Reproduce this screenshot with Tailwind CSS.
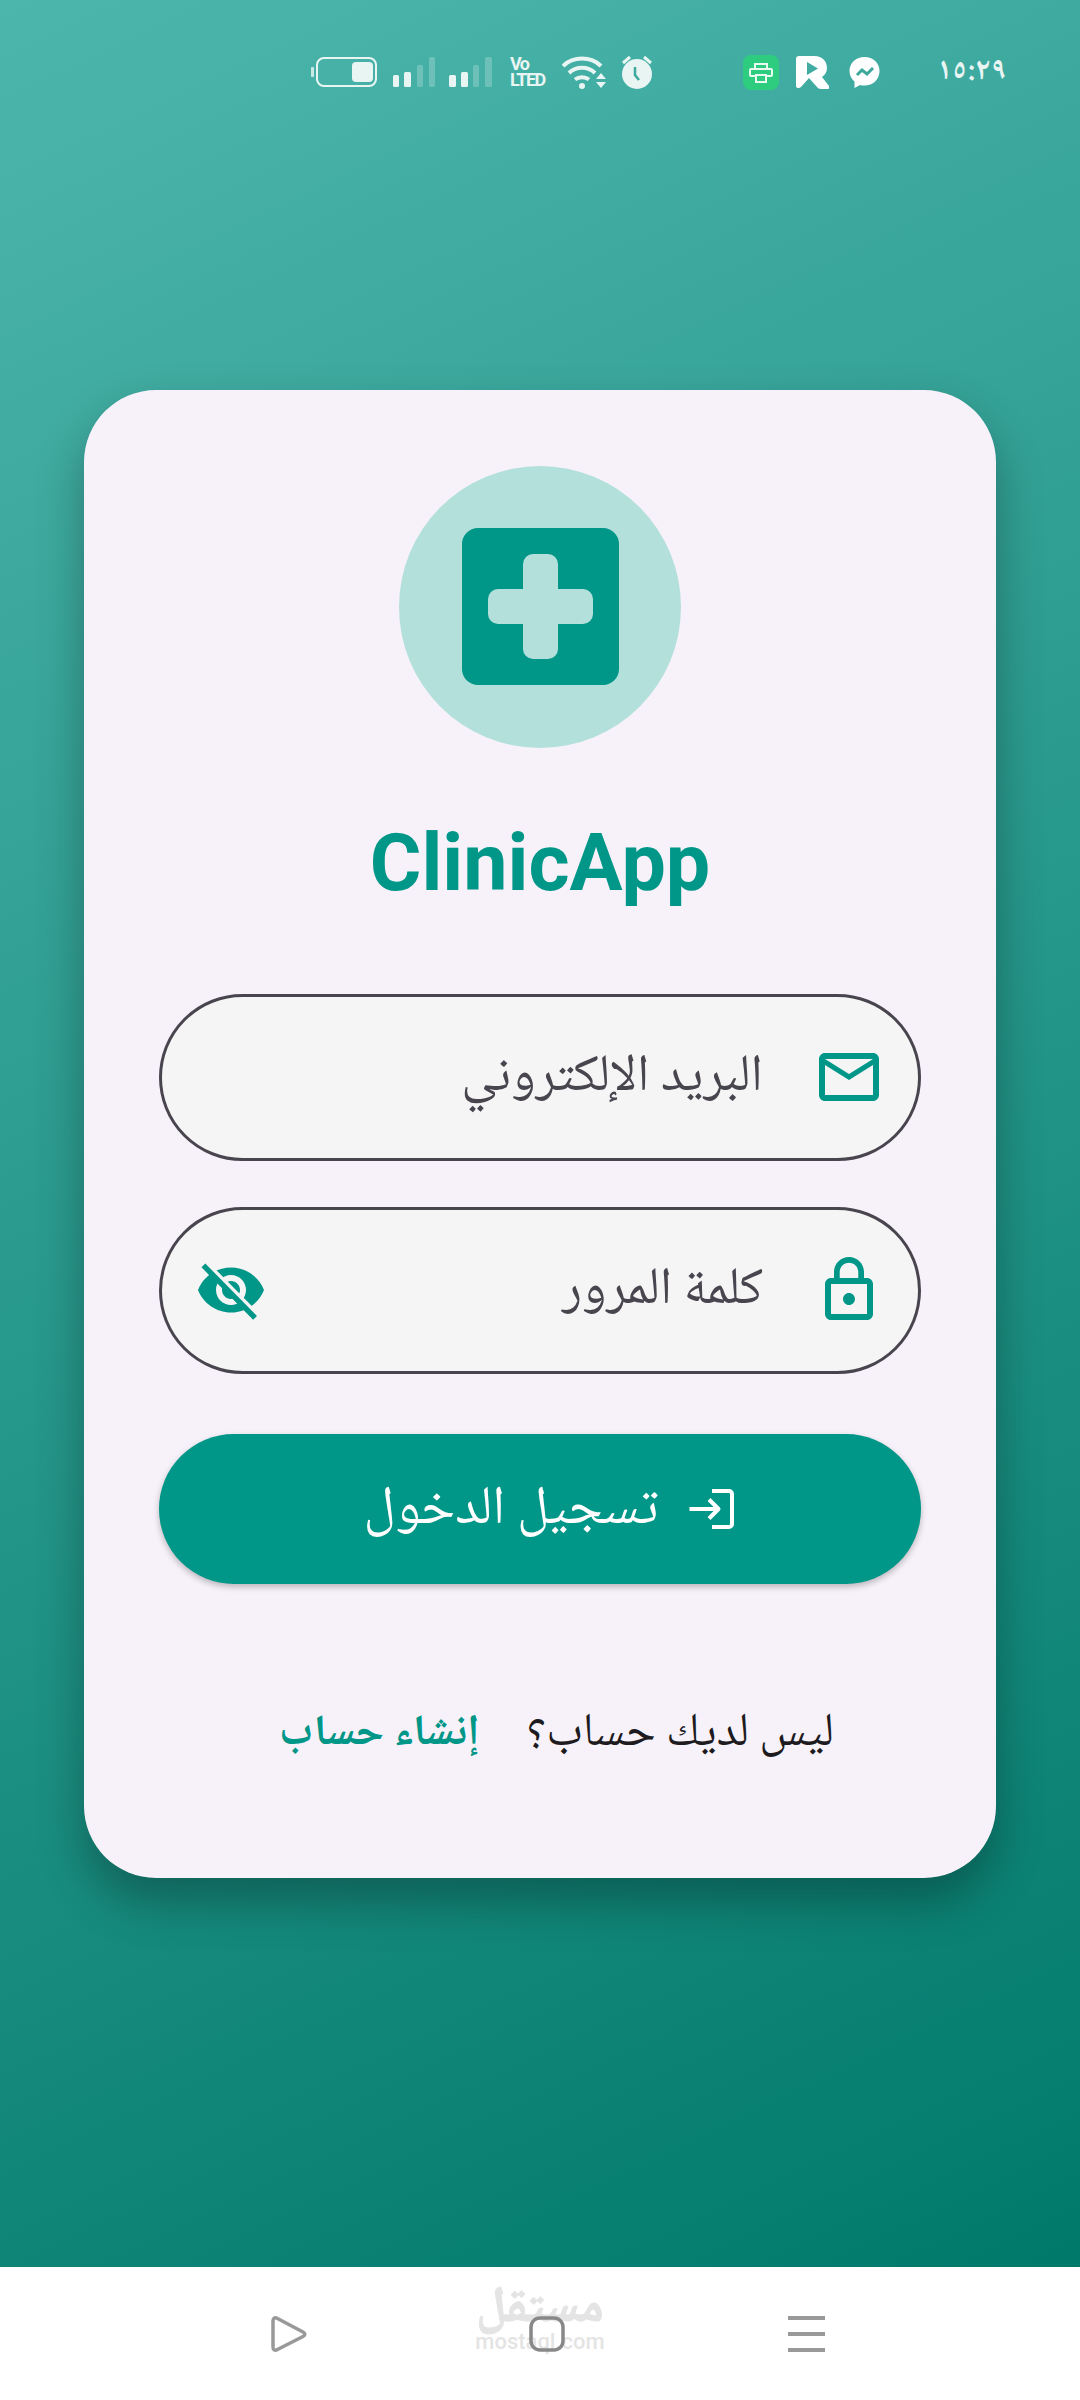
<!DOCTYPE html>
<html lang="ar" dir="rtl">
<head>
	<meta charset="UTF-8">
	<title>ClinicApp</title>
	<script src="https://cdn.jsdelivr.net/npm/@tailwindcss/browser@4"></script>
</head>
<body class="w-[1080px] h-[2400px] overflow-hidden bg-white font-['Noto_Naskh_Arabic','Noto_Sans_Arabic','DejaVu_Sans',sans-serif]">
	<div class="relative h-[2267px] flex items-center justify-center bg-[linear-gradient(154.5deg,#4db6ac,#00796b)]">

		<!-- شريط الحالة -->
		<div dir="ltr" class="absolute top-0 left-0 right-0 h-[144px] flex items-center pl-[311px] text-[#e8f5f3]">
			<svg width="66" height="30" viewBox="0 0 66 30" fill="none">
				<rect x="0" y="10" width="3" height="10" rx="1" fill="#c9e9e5"/>
				<rect x="6" y="1" width="59" height="28" rx="7" stroke="#e8f5f3" stroke-width="2"/>
				<rect x="41" y="5" width="21" height="20" rx="4" fill="#e8f5f3"/>
			</svg>
			<svg class="ml-[16px]" width="42" height="30" viewBox="0 0 42 30" fill="#e8f5f3">
				<rect x="0" y="18" width="6" height="12" rx="1.5"/>
				<rect x="11" y="15" width="7" height="15" rx="1.5"/>
				<rect x="24" y="8" width="6" height="22" rx="1.5" opacity="0.25"/>
				<rect x="36" y="0" width="6" height="30" rx="1.5" opacity="0.25"/>
			</svg>
			<svg class="ml-[14px]" width="43" height="30" viewBox="0 0 43 30" fill="#e8f5f3">
				<rect x="0" y="18" width="7" height="12" rx="1.5"/>
				<rect x="12" y="15" width="7" height="15" rx="1.5"/>
				<rect x="24" y="8" width="6" height="22" rx="1.5" opacity="0.25"/>
				<rect x="36" y="0" width="7" height="30" rx="1.5" opacity="0.25"/>
			</svg>
			<div class="ml-[18px] w-[33px] flex flex-col font-['Roboto'] font-bold text-[18px] leading-[16px] tracking-[-1.5px]">
				<span>Vo</span>
				<span>LTED</span>
			</div>
			<svg class="ml-[19px]" width="44" height="34" viewBox="0 0 44 34" fill="none" stroke="#e8f5f3" stroke-width="4">
				<path d="M1 11C11 1 29 1 39 11"/>
				<path d="M7 18C14 11 26 11 33 18"/>
				<path d="M13 24.500C17 21.500 23 21.500 27 24.500"/>
				<circle cx="20" cy="31" r="3" fill="#e8f5f3" stroke="none"/>
				<path d="M34 24h10l-5-6zM34 27h10l-5 6z" fill="#e8f5f3" stroke="none"/>
			</svg>
			<svg class="ml-[15px]" width="32" height="34" viewBox="0 0 32 34">
				<circle cx="16" cy="19" r="15" fill="#e8f5f3"/>
				<path d="M14 12v8l4 5" fill="none" stroke="#3fa89c" stroke-width="2.500"/>
				<path d="M2 8l7-6M30 8l-7-6" stroke="#e8f5f3" stroke-width="3"/>
			</svg>
			<svg class="ml-[90px]" width="36" height="35" viewBox="0 0 36 35" fill="none" stroke="#e8fbf1" stroke-width="2">
				<rect width="36" height="35" rx="8" fill="#2ecc7e" stroke="none"/>
				<path d="M12 14V9h12v5M12 21H8a1 1 0 0 1-1-1v-5a1 1 0 0 1 1-1h20a1 1 0 0 1 1 1v5a1 1 0 0 1-1 1h-4"/>
				<rect x="13" y="20" width="10" height="7"/>
			</svg>
			<svg class="ml-[17px]" width="33" height="35" viewBox="0 0 33 35" fill="#fff">
				<path fill-rule="evenodd" d="M3 1H18C27 1 31 7 31 13C31 17 29 20 26 22L33 31C34 33 33 34 31 34H25C23 34 22 33 21 32L13 23L5 32C3 34 0 33 0 31V4C0 2 1 1 3 1ZM11 7L22 13.500L11 20Z"/>
			</svg>
			<svg class="ml-[20px]" width="31" height="33" viewBox="0 0 31 33">
				<path d="M15.500 1C7 1 0.500 7 0.500 15C0.500 19.500 2.500 23 5.500 25.500V32L11 29C12.500 29.500 14 29.500 15.500 29.500C24 29.500 30.500 23.500 30.500 15C30.500 7 24 1 15.500 1Z" fill="#fff"/>
				<path d="M8 19L13 14L18 18L24 12" fill="none" stroke="#3fa89c" stroke-width="3"/>
			</svg>
			<span class="ml-[57px] font-bold text-[31px] leading-none">١٥:٢٩</span>
		</div>

		<!-- البطاقة -->
		<div class="w-[912px] h-[1488px] rounded-[72px] bg-[#f7f2fa] shadow-[0_24px_48px_rgba(0,0,0,0.3)] px-[75px] pt-[76px] flex flex-col">
			<div class="self-center w-[282px] h-[282px] rounded-full bg-[#b4e0dc] flex items-center justify-center">
				<svg width="157" height="157" viewBox="0 0 157 157">
					<rect width="157" height="157" rx="16" fill="#009688"/>
					<rect x="61" y="26" width="35" height="105" rx="10" fill="#b4e0dc"/>
					<rect x="26" y="61" width="105" height="35" rx="10" fill="#b4e0dc"/>
				</svg>
			</div>
			<h1 dir="ltr" class="mt-[60px] h-[110px] text-center font-['Roboto'] font-bold text-[79px] leading-[110px] text-[#009688]">ClinicApp</h1>

			<div class="mt-[76px] h-[167px] rounded-full border-[3px] border-[#49454f] bg-[#f5f5f5] flex items-center px-[33px] text-[#49454f] text-[52px]">
				<svg class="shrink-0" width="72" height="72" viewBox="0 0 24 24" fill="#009688">
					<path d="M20 4H4c-1.100 0-2 .9-2 2v12c0 1.100.9 2 2 2h16c1.100 0 2-.9 2-2V6c0-1.100-.9-2-2-2zm0 14H4V8l8 5 8-5v10zm-8-7L4 6h16l-8 5z"/>
				</svg>
				<span class="mr-[50px] pt-[3px]">البريد الإلكتروني</span>
			</div>

			<div class="mt-[46px] h-[167px] rounded-full border-[3px] border-[#49454f] bg-[#f5f5f5] flex items-center px-[33px] text-[#49454f] text-[52px]">
				<svg class="shrink-0" width="72" height="72" viewBox="0 0 24 24" fill="#009688">
					<path d="M12 17c1.100 0 2-.9 2-2s-.9-2-2-2-2 .9-2 2 .9 2 2 2zm6-9h-1V6c0-2.760-2.240-5-5-5S7 3.240 7 6v2H6c-1.100 0-2 .9-2 2v10c0 1.100.9 2 2 2h12c1.100 0 2-.9 2-2V10c0-1.100-.9-2-2-2zM8.900 6c0-1.710 1.390-3.100 3.100-3.100s3.100 1.390 3.100 3.100v2H8.900V6zM18 20H6V10h12v10z"/>
				</svg>
				<span class="mr-[50px] pt-[3px]">كلمة المرور</span>
				<svg class="shrink-0 mr-auto" width="72" height="72" viewBox="0 0 24 24" fill="#009688">
					<path fill-rule="evenodd" d="M12 4.500C7 4.500 2.730 7.610 1 12c1.730 4.390 6 7.500 11 7.500s9.270-3.110 11-7.500c-1.730-4.390-6-7.500-11-7.500zM12 17c-2.760 0-5-2.240-5-5s2.240-5 5-5 5 2.240 5 5-2.240 5-5 5zm0-8c-1.660 0-3 1.340-3 3s1.340 3 3 3 3-1.340 3-3-1.340-3-3-3z"/>
					<path d="M4 3.500L21.300 21" stroke="#f5f5f5" stroke-width="1.800"/>
					<path d="M2.800 3.800L20 21.300" stroke="#009688" stroke-width="1.800"/>
				</svg>
			</div>

			<button class="mt-[60px] h-[150px] rounded-full bg-[#009688] shadow-[0_3px_6px_rgba(0,0,0,0.25)] flex items-center justify-center pl-[22px] text-white text-[54px]">
				<svg class="shrink-0" width="54" height="54" viewBox="0 0 54 54" fill="none" stroke="#fff" stroke-width="4" stroke-linejoin="round">
					<path d="M4.500 27H33M24 17.500L33.500 27L24 36.500"/>
					<path d="M27 9H44a3 3 0 0 1 3 3V42a3 3 0 0 1-3 3H27"/>
				</svg>
				<span class="mr-[26px] pt-[6px]">تسجيل الدخول</span>
			</button>

			<div class="mt-[116px] flex items-center pr-[87px] text-[47px]">
				<span class="text-[#1d1b20]">ليس لديك حساب؟</span>
				<a href="#" class="mr-[47px] font-bold text-[43px] text-[#009688]">إنشاء حساب</a>
			</div>
		</div>
	</div>

	<!-- شريط التنقل -->
	<div dir="ltr" class="relative h-[133px] bg-white flex items-center pl-[271px]">
		<div class="absolute left-[474px] top-[22px] w-[132px] flex flex-col items-center text-[#e4e4e4] font-bold">
			<span dir="rtl" class="text-[50px] leading-[44px] [-webkit-text-stroke:1px_#e4e4e4]">مستقل</span>
			<span class="mt-[2px] font-['Roboto'] text-[22px] leading-[14px] font-medium">mostaql.com</span>
		</div>
		<svg class="relative" width="36" height="36" viewBox="0 0 36 36" fill="none" stroke="#999" stroke-width="3.500">
			<path d="M2 5C2 2 4 1 6.500 2.500L32 16C34.500 17.500 34.500 19 32 20.500L6.500 33.500C4 35 2 34 2 31Z"/>
		</svg>
		<svg class="relative ml-[222px]" width="36" height="36" viewBox="0 0 36 36" fill="none" stroke="#888" stroke-width="3.500">
			<rect x="2" y="2" width="32" height="32" rx="9"/>
		</svg>
		<div class="relative ml-[223px] w-[37px] h-[36px] flex flex-col justify-between">
			<span class="h-[4px] bg-[#999]"></span>
			<span class="h-[4px] bg-[#999]"></span>
			<span class="h-[4px] bg-[#999]"></span>
		</div>
	</div>
</body>
</html>
